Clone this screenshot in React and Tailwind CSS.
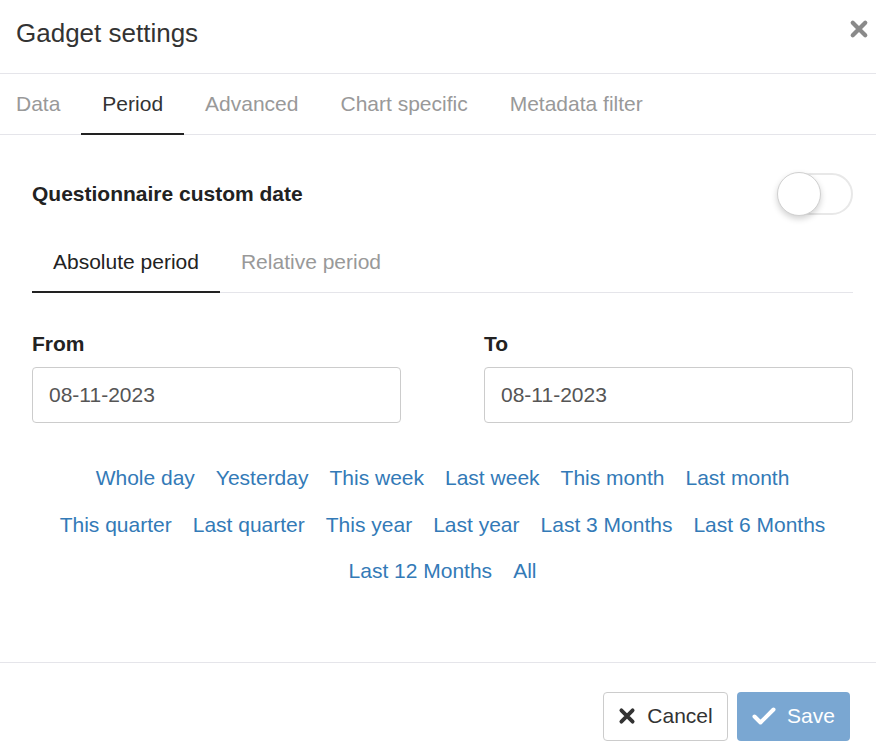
import { useState } from 'react';

const FONT = { fontFamily: '"Liberation Sans", Arial, sans-serif' };

const TABS = ['Data', 'Period', 'Advanced', 'Chart specific', 'Metadata filter'];
const QUICK_ROWS = [
  ['Whole day', 'Yesterday', 'This week', 'Last week', 'This month', 'Last month'],
  ['This quarter', 'Last quarter', 'This year', 'Last year', 'Last 3 Months', 'Last 6 Months'],
  ['Last 12 Months', 'All'],
];

const XIcon = ({ className }) => (
  <svg viewBox="0 0 16 16" className={className} fill="none">
    <path d="M3 3 L13 13 M13 3 L3 13" stroke="currentColor" strokeWidth="3.4" strokeLinecap="round" />
  </svg>
);

const CheckIcon = ({ className }) => (
  <svg viewBox="0 0 24 18" className={className} fill="none">
    <path d="M2.5 9.5 L8.5 15.5 L21.5 2.5" stroke="currentColor" strokeWidth="4" strokeLinecap="round" strokeLinejoin="round" />
  </svg>
);

// toggle switch, off state
const Toggle = ({ on, onChange }) => (
  <button onClick={() => onChange(!on)} className="relative w-[76px] h-[44px] shrink-0">
    <span className="absolute right-0 top-[1px] w-[64px] h-[42px] rounded-full border-2 border-[#e8e8e8] bg-white" />
    <span
      className={`absolute top-0 w-[44px] h-[44px] rounded-full bg-white border border-[#d0d0d0] shadow-[0_3px_6px_rgba(0,0,0,0.18)] transition-all ${on ? 'left-[32px]' : 'left-0'}`}
    />
  </button>
);

export default function App() {
  const [tab, setTab] = useState('Period');
  const [sub, setSub] = useState('Absolute period');
  const [custom, setCustom] = useState(false);
  const [from, setFrom] = useState('08-11-2023');
  const [to, setTo] = useState('08-11-2023');

  return (
    <div style={FONT} className="w-[876px] h-[754px] overflow-hidden bg-white text-[#333]">
      {/* Header */}
      <div className="h-[74px] border-b border-[#e5e5ea] flex items-start justify-between pl-4 pr-[7px] pt-[16px]">
        <h1 className="text-[26px] leading-[34px] font-normal text-[#333]">Gadget settings</h1>
        <button className="text-[#8a8a8a] mt-[3px]">
          <XIcon className="w-[20px] h-[20px]" />
        </button>
      </div>

      {/* Tabs */}
      <div className="h-[61px] border-b border-[#e5e5ea] flex -ml-[5px]">
        {TABS.map((t) => (
          <button
            key={t}
            onClick={() => setTab(t)}
            className={`relative h-[60px] px-[21px] text-[21px] leading-[24px] flex items-center ${
              tab === t ? 'text-[#333]' : 'text-[#999]'
            }`}
          >
            {t}
            {tab === t && <span className="absolute left-0 right-0 -bottom-[1px] h-[2px] bg-[#222]" />}
          </button>
        ))}
      </div>

      {/* Body */}
      <div className="pl-8 pr-[23px]">
        <div className="mt-[37px] flex items-center justify-between">
          <span className="text-[21px] leading-[24px] font-bold text-[#222]">Questionnaire custom date</span>
          <Toggle on={custom} onChange={setCustom} />
        </div>

        <div className="mt-[16px] flex border-b border-[#e5e5ea]">
          {['Absolute period', 'Relative period'].map((t) => (
            <button
              key={t}
              onClick={() => setSub(t)}
              className={`relative h-[60px] px-[21px] text-[21px] leading-[24px] flex items-center ${
                sub === t ? 'text-[#222]' : 'text-[#999]'
              }`}
            >
              {t}
              {sub === t && <span className="absolute left-0 right-0 -bottom-[1px] h-[2px] bg-[#222]" />}
            </button>
          ))}
        </div>

        <div className="mt-[39px] grid grid-cols-2 gap-x-[83px]">
          <div>
            <label className="block text-[21px] leading-[24px] font-bold text-[#222] mb-[11px]">From</label>
            <input
              value={from}
              onChange={(e) => setFrom(e.target.value)}
              className="w-full h-[56px] border border-[#ccc] rounded-[4px] px-4 text-[21px] text-[#555] outline-none"
            />
          </div>
          <div>
            <label className="block text-[21px] leading-[24px] font-bold text-[#222] mb-[11px]">To</label>
            <input
              value={to}
              onChange={(e) => setTo(e.target.value)}
              className="w-full h-[56px] border border-[#ccc] rounded-[4px] px-4 text-[21px] text-[#555] outline-none"
            />
          </div>
        </div>

        <div className="mt-[32px] flex flex-col">
          {QUICK_ROWS.map((row, i) => (
            <div key={i} className="flex justify-center gap-x-[21px] h-[46.5px] items-center">
              {row.map((l) => (
                <a key={l} href="#" className="text-[21px] leading-[24px] text-[#337ab7]">
                  {l}
                </a>
              ))}
            </div>
          ))}
        </div>
      </div>

      {/* Footer */}
      <div className="mt-[67px] border-t border-[#e5e5ea] flex justify-end gap-[9px] pt-[29px] pr-[26px]">
        <button className="h-[49px] w-[125px] flex items-center justify-center gap-[11px] border border-[#ccc] rounded-[4px] bg-white text-[21px] text-[#333]">
          <XIcon className="w-[18px] h-[18px]" />
          Cancel
        </button>
        <button className="h-[49px] w-[113px] flex items-center justify-center gap-[11px] rounded-[4px] bg-[#7aa7d2] text-[21px] text-white">
          <CheckIcon className="w-[24px] h-[18px]" />
          Save
        </button>
      </div>
    </div>
  );
}
